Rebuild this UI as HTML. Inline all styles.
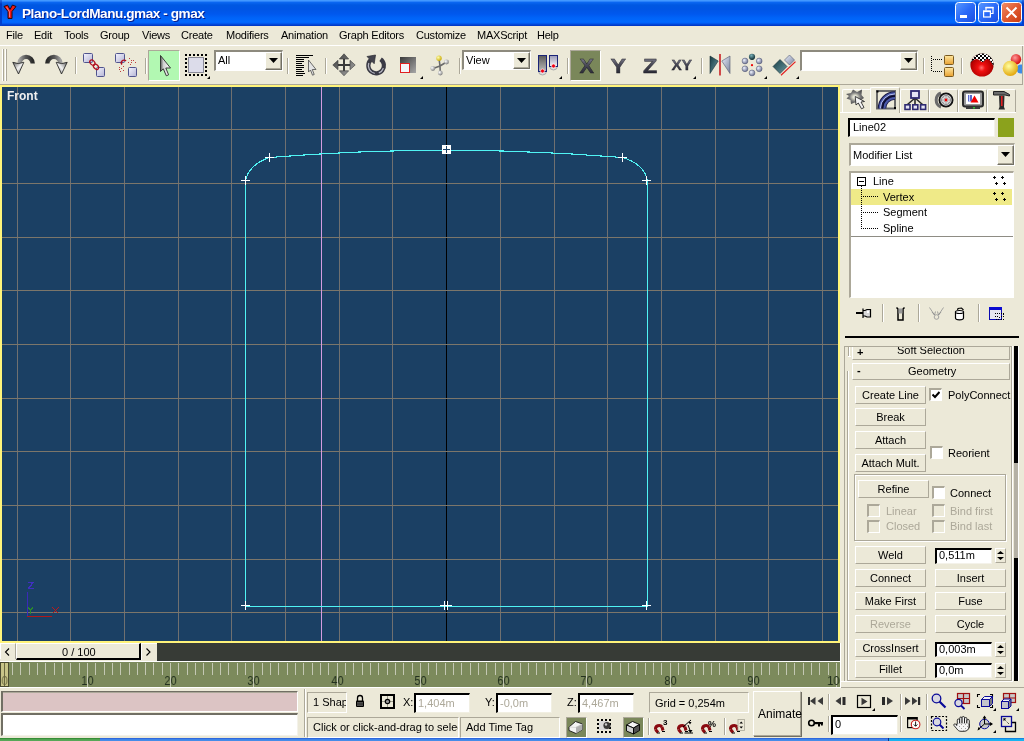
<!DOCTYPE html><html><head><meta charset="utf-8"><style>
*{margin:0;padding:0;box-sizing:border-box}
html,body{width:1024px;height:741px;overflow:hidden;background:#ECE9D8;font-family:"Liberation Sans",sans-serif;font-size:11px;color:#000}
.a{position:absolute}
.t{position:absolute;white-space:nowrap;line-height:13px}
.btn{position:absolute;background:#ECE9D8;border-top:1px solid #fff;border-left:1px solid #fff;border-right:1px solid #ACA899;border-bottom:1px solid #ACA899;text-align:center;line-height:16px;white-space:nowrap}
.sunk{position:absolute;background:#fff;border-top:2px solid #000;border-left:2px solid #000;border-right:1px solid #F4F2EA;border-bottom:1px solid #F4F2EA}
.sunk1{position:absolute;border-top:1px solid #ACA899;border-left:1px solid #ACA899;border-right:1px solid #fff;border-bottom:1px solid #fff}
.rais{position:absolute;border-top:1px solid #fff;border-left:1px solid #fff;border-right:1px solid #ACA899;border-bottom:1px solid #ACA899}
.vsep{position:absolute;width:2px;border-left:1px solid #ACA899;border-right:1px solid #fff}
.cb{position:absolute;width:13px;height:13px;background:#fff;border-top:2px solid #ACA899;border-left:2px solid #ACA899;border-right:1px solid #fff;border-bottom:1px solid #fff}
.dis{color:#ACA899}
.t,.btn{will-change:transform}</style></head><body>
<div class="a" style="left:0px;top:0px;width:1024px;height:26px;background:linear-gradient(#4AA0FF 0,#3A90FF 1px,#0A66F0 2.5px,#0058E2 5px,#0055E4 9px,#0058EE 14px,#0064F8 18px,#0068FF 22px,#0060F8 23px,#0046D8 24.5px,#0032C0 26px);"></div>
<div class="a" style="left:0px;top:0px;width:2px;height:26px;background:linear-gradient(#2A70E8,#0038C0 4px,#0040D0);"></div>
<div class="a" style="left:1022px;top:0px;width:2px;height:26px;background:linear-gradient(#2A70E8,#0038C0 4px,#0040D0);"></div>
<div class="t" style="left:22px;top:5px;font-size:13.6px;font-weight:bold;color:#fff;line-height:17px;letter-spacing:-0.45px;text-shadow:1px 1px 0 #0A1E8C">Plano-LordManu.gmax - gmax</div>
<div class="a" style="left:0px;top:45px;width:1024px;height:1px;background:#fff;"></div>
<div class="t" style="left:6px;top:29px;letter-spacing:-0.22px">File</div>
<div class="t" style="left:34px;top:29px;letter-spacing:-0.22px">Edit</div>
<div class="t" style="left:64px;top:29px;letter-spacing:-0.22px">Tools</div>
<div class="t" style="left:100px;top:29px;letter-spacing:-0.22px">Group</div>
<div class="t" style="left:142px;top:29px;letter-spacing:-0.22px">Views</div>
<div class="t" style="left:181px;top:29px;letter-spacing:-0.22px">Create</div>
<div class="t" style="left:226px;top:29px;letter-spacing:-0.22px">Modifiers</div>
<div class="t" style="left:281px;top:29px;letter-spacing:-0.22px">Animation</div>
<div class="t" style="left:339px;top:29px;letter-spacing:-0.22px">Graph Editors</div>
<div class="t" style="left:416px;top:29px;letter-spacing:-0.22px">Customize</div>
<div class="t" style="left:477px;top:29px;letter-spacing:-0.22px">MAXScript</div>
<div class="t" style="left:537px;top:29px;letter-spacing:-0.22px">Help</div>
<div class="a" style="left:0px;top:84px;width:1024px;height:1px;background:#ACA899;"></div>
<div class="a" style="left:2px;top:49px;width:1px;height:32px;background:#fff;"></div>
<div class="a" style="left:3px;top:49px;width:1px;height:32px;background:#ACA899;"></div>
<div class="a" style="left:5px;top:49px;width:1px;height:32px;background:#fff;"></div>
<div class="a" style="left:6px;top:49px;width:1px;height:32px;background:#ACA899;"></div>
<div class="vsep" style="left:75px;top:57px;height:17px"></div>
<div class="vsep" style="left:145px;top:58px;height:16px"></div>
<div class="vsep" style="left:287px;top:58px;height:16px"></div>
<div class="vsep" style="left:325px;top:58px;height:16px"></div>
<div class="vsep" style="left:459px;top:58px;height:16px"></div>
<div class="vsep" style="left:567px;top:58px;height:16px"></div>
<div class="vsep" style="left:701px;top:58px;height:16px"></div>
<div class="vsep" style="left:923px;top:58px;height:16px"></div>
<div class="vsep" style="left:961px;top:58px;height:16px"></div>
<div class="a" style="left:1022px;top:46px;width:1px;height:38px;background:#ACA899;"></div>
<div class="a" style="left:1023px;top:46px;width:1px;height:39px;background:#ECE9D8;"></div>
<div class="a" style="left:148px;top:50px;width:32px;height:31px;background:#B2F8B2;border-top:1px solid #ACA899;border-left:1px solid #ACA899;border-right:1px solid #fff;border-bottom:1px solid #fff"></div>
<div class="a" style="left:570px;top:50px;width:31px;height:31px;background:#7A875A;border-top:1px solid #ACA899;border-left:1px solid #ACA899;border-right:1px solid #fff;border-bottom:1px solid #fff"></div>
<div class="a" style="left:214px;top:50px;width:69px;height:21px;background:#fff;border-top:2px solid #8D8A7E;border-left:2px solid #8D8A7E;border-right:1px solid #fff;border-bottom:1px solid #fff"></div>
<div class="t" style="left:218px;top:54px;">All</div>
<div class="btn" style="left:265px;top:52px;width:17px;height:18px;box-shadow:inset -1px -1px 0 #ACA899;border-right-color:#716F64;border-bottom-color:#716F64"></div>
<svg class="a" style="left:269px;top:58px" width="9" height="5"><path d="M0 0H9L4.5 5Z" fill="#000"/></svg>
<div class="a" style="left:462px;top:50px;width:69px;height:20px;background:#fff;border-top:2px solid #8D8A7E;border-left:2px solid #8D8A7E;border-right:1px solid #fff;border-bottom:1px solid #fff"></div>
<div class="t" style="left:466px;top:54px;">View</div>
<div class="btn" style="left:513px;top:52px;width:17px;height:17px;box-shadow:inset -1px -1px 0 #ACA899;border-right-color:#716F64;border-bottom-color:#716F64"></div>
<svg class="a" style="left:517px;top:58px" width="9" height="5"><path d="M0 0H9L4.5 5Z" fill="#000"/></svg>
<div class="a" style="left:800px;top:50px;width:118px;height:21px;background:#fff;border-top:2px solid #8D8A7E;border-left:2px solid #8D8A7E;border-right:1px solid #fff;border-bottom:1px solid #fff"></div>
<div class="btn" style="left:900px;top:52px;width:17px;height:18px;box-shadow:inset -1px -1px 0 #ACA899;border-right-color:#716F64;border-bottom-color:#716F64"></div>
<svg class="a" style="left:904px;top:58px" width="9" height="5"><path d="M0 0H9L4.5 5Z" fill="#000"/></svg>
<div class="a" style="left:0px;top:85px;width:840px;height:558px;background:#FFF47A;"></div>
<svg class="a" style="left:2px;top:87px" width="836" height="554" shape-rendering="crispEdges"><g transform="translate(-2,-87)"><rect x="2" y="87" width="836" height="554" fill="#1B4064"/><rect x="17" y="87" width="1" height="554" fill="#707070"/><rect x="70" y="87" width="1" height="554" fill="#707070"/><rect x="124" y="87" width="1" height="554" fill="#707070"/><rect x="178" y="87" width="1" height="554" fill="#707070"/><rect x="231" y="87" width="1" height="554" fill="#707070"/><rect x="285" y="87" width="1" height="554" fill="#707070"/><rect x="339" y="87" width="1" height="554" fill="#707070"/><rect x="392" y="87" width="1" height="554" fill="#707070"/><rect x="446" y="87" width="1" height="554" fill="#000"/><rect x="500" y="87" width="1" height="554" fill="#707070"/><rect x="554" y="87" width="1" height="554" fill="#707070"/><rect x="607" y="87" width="1" height="554" fill="#707070"/><rect x="661" y="87" width="1" height="554" fill="#707070"/><rect x="715" y="87" width="1" height="554" fill="#707070"/><rect x="768" y="87" width="1" height="554" fill="#707070"/><rect x="822" y="87" width="1" height="554" fill="#707070"/><rect x="2" y="129" width="836" height="1" fill="#7C766A"/><rect x="2" y="183" width="836" height="1" fill="#7C766A"/><rect x="2" y="237" width="836" height="1" fill="#7C766A"/><rect x="2" y="290" width="836" height="1" fill="#7C766A"/><rect x="2" y="344" width="836" height="1" fill="#7C766A"/><rect x="2" y="398" width="836" height="1" fill="#7C766A"/><rect x="2" y="451" width="836" height="1" fill="#7C766A"/><rect x="2" y="505" width="836" height="1" fill="#7C766A"/><rect x="2" y="559" width="836" height="1" fill="#7C766A"/><rect x="2" y="612" width="836" height="1" fill="#7C766A"/><rect x="321" y="87" width="1" height="554" fill="#D49CE0"/></g></svg>
<svg class="a" style="left:2px;top:87px" width="836" height="554" shape-rendering="crispEdges"><g transform="translate(-2,-87)"><path d="M245.5 606.5V180.5C247.5 171 255.5 162 269.5 157.5Q446 143 622.5 157.5C637.5 162 645.5 171 647.5 180.5V606.5H245.5Z" fill="none" stroke="#50F4F4" stroke-width="1.1"/><g fill="#FFFFFF" shape-rendering="crispEdges"><rect x="241" y="180" width="9" height="1"/><rect x="245" y="176" width="1" height="9"/><rect x="265" y="157" width="9" height="1"/><rect x="269" y="153" width="1" height="9"/><rect x="618" y="157" width="9" height="1"/><rect x="622" y="153" width="1" height="9"/><rect x="642" y="180" width="9" height="1"/><rect x="646" y="176" width="1" height="9"/><rect x="241" y="605" width="9" height="1"/><rect x="245" y="601" width="1" height="9"/><rect x="642" y="605" width="9" height="1"/><rect x="646" y="601" width="1" height="9"/><rect x="440" y="605" width="12" height="1"/><rect x="444" y="601" width="1" height="9"/><rect x="447" y="601" width="1" height="9"/><rect x="442" y="145" width="9" height="9"/></g><g shape-rendering="crispEdges"><rect x="446" y="146" width="1" height="7" fill="#1B4064"/><rect x="443" y="149" width="7" height="1" fill="#1B4064"/></g><g shape-rendering="crispEdges"><rect x="27" y="592" width="1" height="25" fill="#3A2AB8"/><rect x="27" y="616" width="25" height="1" fill="#B01818"/></g><path d="M28 582.5H33L28.5 588.5H33.5" stroke="#4030C0" stroke-width="1.3" fill="none"/><path d="M52.5 607.5L58.5 613.5M58.5 607.5L52.5 613.5" stroke="#C01818" stroke-width="1.3"/><path d="M28.5 607.5L30.5 610.5L32.5 607.5M30.5 610.5V614" stroke="#2A8A2A" stroke-width="1.2" fill="none"/></g></svg>
<div class="t" style="left:7px;top:90px;color:#F0F0F0;font-weight:bold;font-size:12px">Front</div>
<div class="a" style="left:840px;top:112px;width:176px;height:1px;background:#fff;"></div>
<div class="a" style="left:842px;top:89px;width:29px;height:23px;border-left:1px solid #fff;border-top:1px solid #fff;border-right:1px solid #ACA899;border-radius:2px 2px 0 0"></div>
<div class="a" style="left:870px;top:87px;width:30px;height:26px;background:#ECE9D8;border-left:1px solid #fff;border-top:1px solid #fff;border-right:1px solid #ACA899;border-radius:2px 2px 0 0"></div>
<div class="a" style="left:900px;top:89px;width:29px;height:23px;border-left:1px solid #fff;border-top:1px solid #fff;border-right:1px solid #ACA899;border-radius:2px 2px 0 0"></div>
<div class="a" style="left:929px;top:89px;width:29px;height:23px;border-left:1px solid #fff;border-top:1px solid #fff;border-right:1px solid #ACA899;border-radius:2px 2px 0 0"></div>
<div class="a" style="left:958px;top:89px;width:29px;height:23px;border-left:1px solid #fff;border-top:1px solid #fff;border-right:1px solid #ACA899;border-radius:2px 2px 0 0"></div>
<div class="a" style="left:987px;top:89px;width:29px;height:23px;border-left:1px solid #fff;border-top:1px solid #fff;border-right:1px solid #ACA899;border-radius:2px 2px 0 0"></div>
<div class="sunk" style="left:848px;top:118px;width:147px;height:19px"></div>
<div class="t" style="left:853px;top:121px;">Line02</div>
<div class="a" style="left:998px;top:118px;width:16px;height:19px;background:#8BA21C;"></div>
<div class="a" style="left:849px;top:143px;width:166px;height:23px;background:#fff;border-top:2px solid #ACA899;border-left:2px solid #ACA899;border-right:1px solid #fff;border-bottom:1px solid #fff"></div>
<div class="t" style="left:853px;top:149px;">Modifier List</div>
<div class="btn" style="left:997px;top:145px;width:17px;height:20px;box-shadow:inset -1px -1px 0 #ACA899;border-right-color:#716F64;border-bottom-color:#716F64"></div>
<svg class="a" style="left:1001px;top:152px" width="9" height="5"><path d="M0 0H9L4.5 5Z" fill="#000"/></svg>
<div class="a" style="left:849px;top:171px;width:165px;height:127px;background:#fff;border-top:2px solid #ACA899;border-left:2px solid #ACA899;border-right:1px solid #fff;border-bottom:1px solid #fff"></div>
<div class="a" style="left:851px;top:189px;width:161px;height:16px;background:#EFEA88;"></div>
<div class="a" style="left:851px;top:236px;width:162px;height:1px;background:#8E8C84;"></div>
<div class="a" style="left:857px;top:177px;width:9px;height:9px;border:1px solid #000;background:#fff"></div>
<div class="a" style="left:859px;top:181px;width:5px;height:1px;background:#000;"></div>
<div class="t" style="left:873px;top:175px;">Line</div>
<div class="t" style="left:883px;top:191px;">Vertex</div>
<div class="t" style="left:883px;top:206px;">Segment</div>
<div class="t" style="left:883px;top:222px;">Spline</div>
<svg class="a" style="left:855px;top:185px" width="30" height="46" shape-rendering="crispEdges"><rect x="6" y="1" width="1" height="1" fill="#000"/><rect x="6" y="3" width="1" height="1" fill="#000"/><rect x="6" y="5" width="1" height="1" fill="#000"/><rect x="6" y="7" width="1" height="1" fill="#000"/><rect x="6" y="9" width="1" height="1" fill="#000"/><rect x="6" y="11" width="1" height="1" fill="#000"/><rect x="6" y="13" width="1" height="1" fill="#000"/><rect x="6" y="15" width="1" height="1" fill="#000"/><rect x="6" y="17" width="1" height="1" fill="#000"/><rect x="6" y="19" width="1" height="1" fill="#000"/><rect x="6" y="21" width="1" height="1" fill="#000"/><rect x="6" y="23" width="1" height="1" fill="#000"/><rect x="6" y="25" width="1" height="1" fill="#000"/><rect x="6" y="27" width="1" height="1" fill="#000"/><rect x="6" y="29" width="1" height="1" fill="#000"/><rect x="6" y="31" width="1" height="1" fill="#000"/><rect x="6" y="33" width="1" height="1" fill="#000"/><rect x="6" y="35" width="1" height="1" fill="#000"/><rect x="6" y="37" width="1" height="1" fill="#000"/><rect x="6" y="39" width="1" height="1" fill="#000"/><rect x="6" y="41" width="1" height="1" fill="#000"/><rect x="6" y="43" width="1" height="1" fill="#000"/><rect x="8" y="11" width="1" height="1" fill="#000"/><rect x="10" y="11" width="1" height="1" fill="#000"/><rect x="12" y="11" width="1" height="1" fill="#000"/><rect x="14" y="11" width="1" height="1" fill="#000"/><rect x="16" y="11" width="1" height="1" fill="#000"/><rect x="18" y="11" width="1" height="1" fill="#000"/><rect x="20" y="11" width="1" height="1" fill="#000"/><rect x="22" y="11" width="1" height="1" fill="#000"/><rect x="8" y="27" width="1" height="1" fill="#000"/><rect x="10" y="27" width="1" height="1" fill="#000"/><rect x="12" y="27" width="1" height="1" fill="#000"/><rect x="14" y="27" width="1" height="1" fill="#000"/><rect x="16" y="27" width="1" height="1" fill="#000"/><rect x="18" y="27" width="1" height="1" fill="#000"/><rect x="20" y="27" width="1" height="1" fill="#000"/><rect x="22" y="27" width="1" height="1" fill="#000"/><rect x="8" y="43" width="1" height="1" fill="#000"/><rect x="10" y="43" width="1" height="1" fill="#000"/><rect x="12" y="43" width="1" height="1" fill="#000"/><rect x="14" y="43" width="1" height="1" fill="#000"/><rect x="16" y="43" width="1" height="1" fill="#000"/><rect x="18" y="43" width="1" height="1" fill="#000"/><rect x="20" y="43" width="1" height="1" fill="#000"/><rect x="22" y="43" width="1" height="1" fill="#000"/></svg>
<svg class="a" style="left:993px;top:176px" width="14" height="10" shape-rendering="crispEdges"><rect x="1" y="0" width="1" height="3" fill="#000"/><rect x="0" y="1" width="3" height="1" fill="#000"/><rect x="9" y="0" width="1" height="3" fill="#000"/><rect x="8" y="1" width="3" height="1" fill="#000"/><rect x="3" y="6" width="1" height="3" fill="#000"/><rect x="2" y="7" width="3" height="1" fill="#000"/><rect x="11" y="6" width="1" height="3" fill="#000"/><rect x="10" y="7" width="3" height="1" fill="#000"/></svg>
<svg class="a" style="left:993px;top:192px" width="14" height="10" shape-rendering="crispEdges"><rect x="1" y="0" width="1" height="3" fill="#000"/><rect x="0" y="1" width="3" height="1" fill="#000"/><rect x="9" y="0" width="1" height="3" fill="#000"/><rect x="8" y="1" width="3" height="1" fill="#000"/><rect x="3" y="6" width="1" height="3" fill="#000"/><rect x="2" y="7" width="3" height="1" fill="#000"/><rect x="11" y="6" width="1" height="3" fill="#000"/><rect x="10" y="7" width="3" height="1" fill="#000"/></svg>
<div class="vsep" style="left:882px;top:304px;height:18px"></div>
<div class="vsep" style="left:918px;top:304px;height:18px"></div>
<div class="vsep" style="left:978px;top:304px;height:18px"></div>
<div class="a" style="left:845px;top:336px;width:174px;height:2px;background:#000;"></div>
<div class="a" style="left:844px;top:346px;width:1px;height:335px;background:#ACA899;"></div>
<div class="a" style="left:847px;top:371px;width:1px;height:309px;background:#ACA899;"></div>
<div class="a" style="left:848px;top:371px;width:1px;height:309px;background:#fff;"></div>
<div class="a" style="left:1011px;top:346px;width:1px;height:335px;background:#ACA899;"></div>
<div class="a" style="left:1012px;top:346px;width:1px;height:336px;background:#fff;"></div>
<div class="a" style="left:847px;top:680px;width:165px;height:1px;background:#ACA899;"></div>
<div class="a" style="left:841px;top:681px;width:172px;height:1px;background:#fff;"></div>
<div class="a" style="left:840px;top:643px;width:1px;height:45px;background:#fff;"></div>
<div class="a" style="left:841px;top:687px;width:183px;height:1px;background:#ACA899;"></div>
<div class="a" style="left:1014px;top:346px;width:4px;height:117px;background:#000;"></div>
<div class="a" style="left:1014px;top:463px;width:4px;height:95px;background:#B5B1A5;"></div>
<div class="a" style="left:1014px;top:558px;width:4px;height:123px;background:#000;"></div>
<div class="a" style="left:1018px;top:346px;width:1px;height:335px;background:#fff;"></div>
<div class="a" style="left:844px;top:346px;width:168px;height:14px;overflow:hidden"><div class="a" style="left:8px;top:-4px;width:158px;height:18px;border-left:1px solid #fff;border-top:1px solid #fff;border-right:1px solid #ACA899;border-bottom:1px solid #ACA899"></div><div class="t" style="left:13px;top:0px;font-weight:bold">+</div><div class="t" style="left:53px;top:-2px">Soft Selection</div><div class="a" style="left:4px;top:0;width:1px;height:10px;background:#ACA899"></div><div class="a" style="left:5px;top:0;width:1px;height:10px;background:#fff"></div><div class="a" style="left:4px;top:10px;width:3px;height:1px;background:#fff"></div></div>
<div class="a" style="left:844px;top:346px;width:168px;height:1px;background:#ACA899;"></div>
<div class="rais" style="left:852px;top:363px;width:158px;height:17px"></div>
<div class="t" style="left:857px;top:364px;font-weight:bold">-</div>
<div class="t" style="left:908px;top:365px;">Geometry</div>
<div class="btn" style="left:855px;top:386px;width:71px;height:18px;">Create Line</div>
<div class="a" style="left:929px;top:388px;width:13px;height:13px;background:#fff;border-top:2px solid #ACA899;border-left:2px solid #ACA899;border-right:1px solid #fff;border-bottom:1px solid #fff"></div>
<svg class="a" style="left:932px;top:391px" width="8" height="8"><path d="M0.5 3.5L3 6L7.5 1" stroke="#000" stroke-width="2" fill="none"/></svg>
<div class="t" style="left:948px;top:389px;">PolyConnect</div>
<div class="btn" style="left:855px;top:408px;width:71px;height:18px;">Break</div>
<div class="btn" style="left:855px;top:431px;width:71px;height:18px;">Attach</div>
<div class="btn" style="left:855px;top:454px;width:71px;height:18px;">Attach Mult.</div>
<div class="a" style="left:930px;top:446px;width:13px;height:13px;background:#fff;border-top:2px solid #ACA899;border-left:2px solid #ACA899;border-right:1px solid #fff;border-bottom:1px solid #fff"></div>
<div class="t" style="left:948px;top:447px;">Reorient</div>
<div class="a" style="left:854px;top:474px;width:152px;height:67px;border:1px solid #ACA899;box-shadow:1px 1px 0 #fff, inset 1px 1px 0 #fff"></div>
<div class="btn" style="left:858px;top:480px;width:71px;height:18px;">Refine</div>
<div class="a" style="left:932px;top:486px;width:13px;height:13px;background:#fff;border-top:2px solid #ACA899;border-left:2px solid #ACA899;border-right:1px solid #fff;border-bottom:1px solid #fff"></div>
<div class="t" style="left:950px;top:487px;">Connect</div>
<div class="a" style="left:867px;top:504px;width:13px;height:13px;background:#ECE9D8;border-top:2px solid #ACA899;border-left:2px solid #ACA899;border-right:1px solid #fff;border-bottom:1px solid #fff"></div>
<div class="t" style="left:886px;top:505px;color:#ACA899">Linear</div>
<div class="a" style="left:867px;top:520px;width:13px;height:13px;background:#ECE9D8;border-top:2px solid #ACA899;border-left:2px solid #ACA899;border-right:1px solid #fff;border-bottom:1px solid #fff"></div>
<div class="t" style="left:886px;top:520px;color:#ACA899">Closed</div>
<div class="a" style="left:932px;top:504px;width:13px;height:13px;background:#ECE9D8;border-top:2px solid #ACA899;border-left:2px solid #ACA899;border-right:1px solid #fff;border-bottom:1px solid #fff"></div>
<div class="t" style="left:950px;top:505px;color:#ACA899">Bind first</div>
<div class="a" style="left:932px;top:520px;width:13px;height:13px;background:#ECE9D8;border-top:2px solid #ACA899;border-left:2px solid #ACA899;border-right:1px solid #fff;border-bottom:1px solid #fff"></div>
<div class="t" style="left:950px;top:520px;color:#ACA899">Bind last</div>
<div class="btn" style="left:855px;top:546px;width:71px;height:18px;">Weld</div>
<div class="a" style="left:935px;top:548px;width:57px;height:16px;background:#fff;border-top:2px solid #000;border-left:2px solid #000;border-right:1px solid #F4F2EA;border-bottom:1px solid #F4F2EA"></div>
<div class="t" style="left:939px;top:549px;">0,511m</div>
<div class="btn" style="left:995px;top:548px;width:11px;height:15px"></div>
<svg class="a" style="left:997px;top:551px" width="7" height="10"><path d="M3.5 0L7 3H0Z M0 6H7L3.5 9Z" fill="#000"/></svg>
<div class="btn" style="left:855px;top:569px;width:71px;height:18px;">Connect</div>
<div class="btn" style="left:935px;top:569px;width:71px;height:18px;">Insert</div>
<div class="btn" style="left:855px;top:592px;width:71px;height:18px;">Make First</div>
<div class="btn" style="left:935px;top:592px;width:71px;height:18px;">Fuse</div>
<div class="btn" style="left:855px;top:615px;width:71px;height:18px;color:#ACA899">Reverse</div>
<div class="btn" style="left:935px;top:615px;width:71px;height:18px;">Cycle</div>
<div class="btn" style="left:855px;top:639px;width:71px;height:18px;">CrossInsert</div>
<div class="a" style="left:935px;top:642px;width:57px;height:15px;background:#fff;border-top:2px solid #000;border-left:2px solid #000;border-right:1px solid #F4F2EA;border-bottom:1px solid #F4F2EA"></div>
<div class="t" style="left:939px;top:643px;">0,003m</div>
<div class="btn" style="left:995px;top:642px;width:11px;height:15px"></div>
<svg class="a" style="left:997px;top:645px" width="7" height="10"><path d="M3.5 0L7 3H0Z M0 6H7L3.5 9Z" fill="#000"/></svg>
<div class="btn" style="left:855px;top:660px;width:71px;height:18px;">Fillet</div>
<div class="a" style="left:935px;top:663px;width:57px;height:15px;background:#fff;border-top:2px solid #000;border-left:2px solid #000;border-right:1px solid #F4F2EA;border-bottom:1px solid #F4F2EA"></div>
<div class="t" style="left:939px;top:664px;">0,0m</div>
<div class="btn" style="left:995px;top:663px;width:11px;height:15px"></div>
<svg class="a" style="left:997px;top:666px" width="7" height="10"><path d="M3.5 0L7 3H0Z M0 6H7L3.5 9Z" fill="#000"/></svg>
<div class="a" style="left:157px;top:643px;width:683px;height:18px;background:#373B36;"></div>
<div class="a" style="left:0;top:643px;width:16px;height:16px;background:#ECE9D8;border-top:1px solid #fff;border-left:1px solid #fff;border-right:1px solid #ACA899"></div>
<div class="a" style="left:16px;top:643px;width:125px;height:17px;background:#ECE9D8;border-top:1px solid #fff;border-left:1px solid #fff;border-right:2px solid #000;border-bottom:2px solid #000"></div>
<div class="a" style="left:141px;top:643px;width:16px;height:17px;background:#ECE9D8;border-top:1px solid #fff;border-left:1px solid #fff"></div>
<div class="t" style="left:62px;top:646px;">0 / 100</div>
<div class="a" style="left:0px;top:661px;width:840px;height:1px;background:#fff;"></div>
<div class="a" style="left:0px;top:662px;width:840px;height:25px;background:#7C8A5C;"></div>
<svg class="a" style="left:0;top:662px" width="840" height="25" shape-rendering="crispEdges"><rect x="12" y="1" width="1" height="12" fill="#C4C8B4"/><rect x="20" y="1" width="1" height="12" fill="#C4C8B4"/><rect x="29" y="1" width="1" height="12" fill="#C4C8B4"/><rect x="37" y="1" width="1" height="12" fill="#C4C8B4"/><rect x="45" y="1" width="1" height="12" fill="#C4C8B4"/><rect x="54" y="1" width="1" height="12" fill="#C4C8B4"/><rect x="62" y="1" width="1" height="12" fill="#C4C8B4"/><rect x="70" y="1" width="1" height="12" fill="#C4C8B4"/><rect x="79" y="1" width="1" height="12" fill="#C4C8B4"/><rect x="87" y="1" width="1" height="24" fill="#C4C8B4"/><rect x="95" y="1" width="1" height="12" fill="#C4C8B4"/><rect x="104" y="1" width="1" height="12" fill="#C4C8B4"/><rect x="112" y="1" width="1" height="12" fill="#C4C8B4"/><rect x="120" y="1" width="1" height="12" fill="#C4C8B4"/><rect x="129" y="1" width="1" height="12" fill="#C4C8B4"/><rect x="137" y="1" width="1" height="12" fill="#C4C8B4"/><rect x="145" y="1" width="1" height="12" fill="#C4C8B4"/><rect x="153" y="1" width="1" height="12" fill="#C4C8B4"/><rect x="162" y="1" width="1" height="12" fill="#C4C8B4"/><rect x="170" y="1" width="1" height="24" fill="#C4C8B4"/><rect x="178" y="1" width="1" height="12" fill="#C4C8B4"/><rect x="187" y="1" width="1" height="12" fill="#C4C8B4"/><rect x="195" y="1" width="1" height="12" fill="#C4C8B4"/><rect x="203" y="1" width="1" height="12" fill="#C4C8B4"/><rect x="212" y="1" width="1" height="12" fill="#C4C8B4"/><rect x="220" y="1" width="1" height="12" fill="#C4C8B4"/><rect x="228" y="1" width="1" height="12" fill="#C4C8B4"/><rect x="237" y="1" width="1" height="12" fill="#C4C8B4"/><rect x="245" y="1" width="1" height="12" fill="#C4C8B4"/><rect x="253" y="1" width="1" height="24" fill="#C4C8B4"/><rect x="262" y="1" width="1" height="12" fill="#C4C8B4"/><rect x="270" y="1" width="1" height="12" fill="#C4C8B4"/><rect x="278" y="1" width="1" height="12" fill="#C4C8B4"/><rect x="287" y="1" width="1" height="12" fill="#C4C8B4"/><rect x="295" y="1" width="1" height="12" fill="#C4C8B4"/><rect x="303" y="1" width="1" height="12" fill="#C4C8B4"/><rect x="312" y="1" width="1" height="12" fill="#C4C8B4"/><rect x="320" y="1" width="1" height="12" fill="#C4C8B4"/><rect x="328" y="1" width="1" height="12" fill="#C4C8B4"/><rect x="337" y="1" width="1" height="24" fill="#C4C8B4"/><rect x="345" y="1" width="1" height="12" fill="#C4C8B4"/><rect x="353" y="1" width="1" height="12" fill="#C4C8B4"/><rect x="362" y="1" width="1" height="12" fill="#C4C8B4"/><rect x="370" y="1" width="1" height="12" fill="#C4C8B4"/><rect x="378" y="1" width="1" height="12" fill="#C4C8B4"/><rect x="387" y="1" width="1" height="12" fill="#C4C8B4"/><rect x="395" y="1" width="1" height="12" fill="#C4C8B4"/><rect x="403" y="1" width="1" height="12" fill="#C4C8B4"/><rect x="412" y="1" width="1" height="12" fill="#C4C8B4"/><rect x="420" y="1" width="1" height="24" fill="#C4C8B4"/><rect x="428" y="1" width="1" height="12" fill="#C4C8B4"/><rect x="436" y="1" width="1" height="12" fill="#C4C8B4"/><rect x="445" y="1" width="1" height="12" fill="#C4C8B4"/><rect x="453" y="1" width="1" height="12" fill="#C4C8B4"/><rect x="461" y="1" width="1" height="12" fill="#C4C8B4"/><rect x="470" y="1" width="1" height="12" fill="#C4C8B4"/><rect x="478" y="1" width="1" height="12" fill="#C4C8B4"/><rect x="486" y="1" width="1" height="12" fill="#C4C8B4"/><rect x="495" y="1" width="1" height="12" fill="#C4C8B4"/><rect x="503" y="1" width="1" height="24" fill="#C4C8B4"/><rect x="511" y="1" width="1" height="12" fill="#C4C8B4"/><rect x="520" y="1" width="1" height="12" fill="#C4C8B4"/><rect x="528" y="1" width="1" height="12" fill="#C4C8B4"/><rect x="536" y="1" width="1" height="12" fill="#C4C8B4"/><rect x="545" y="1" width="1" height="12" fill="#C4C8B4"/><rect x="553" y="1" width="1" height="12" fill="#C4C8B4"/><rect x="561" y="1" width="1" height="12" fill="#C4C8B4"/><rect x="570" y="1" width="1" height="12" fill="#C4C8B4"/><rect x="578" y="1" width="1" height="12" fill="#C4C8B4"/><rect x="586" y="1" width="1" height="24" fill="#C4C8B4"/><rect x="595" y="1" width="1" height="12" fill="#C4C8B4"/><rect x="603" y="1" width="1" height="12" fill="#C4C8B4"/><rect x="611" y="1" width="1" height="12" fill="#C4C8B4"/><rect x="620" y="1" width="1" height="12" fill="#C4C8B4"/><rect x="628" y="1" width="1" height="12" fill="#C4C8B4"/><rect x="636" y="1" width="1" height="12" fill="#C4C8B4"/><rect x="645" y="1" width="1" height="12" fill="#C4C8B4"/><rect x="653" y="1" width="1" height="12" fill="#C4C8B4"/><rect x="661" y="1" width="1" height="12" fill="#C4C8B4"/><rect x="670" y="1" width="1" height="24" fill="#C4C8B4"/><rect x="678" y="1" width="1" height="12" fill="#C4C8B4"/><rect x="686" y="1" width="1" height="12" fill="#C4C8B4"/><rect x="694" y="1" width="1" height="12" fill="#C4C8B4"/><rect x="703" y="1" width="1" height="12" fill="#C4C8B4"/><rect x="711" y="1" width="1" height="12" fill="#C4C8B4"/><rect x="719" y="1" width="1" height="12" fill="#C4C8B4"/><rect x="728" y="1" width="1" height="12" fill="#C4C8B4"/><rect x="736" y="1" width="1" height="12" fill="#C4C8B4"/><rect x="744" y="1" width="1" height="12" fill="#C4C8B4"/><rect x="753" y="1" width="1" height="24" fill="#C4C8B4"/><rect x="761" y="1" width="1" height="12" fill="#C4C8B4"/><rect x="769" y="1" width="1" height="12" fill="#C4C8B4"/><rect x="778" y="1" width="1" height="12" fill="#C4C8B4"/><rect x="786" y="1" width="1" height="12" fill="#C4C8B4"/><rect x="794" y="1" width="1" height="12" fill="#C4C8B4"/><rect x="803" y="1" width="1" height="12" fill="#C4C8B4"/><rect x="811" y="1" width="1" height="12" fill="#C4C8B4"/><rect x="819" y="1" width="1" height="12" fill="#C4C8B4"/><rect x="828" y="1" width="1" height="12" fill="#C4C8B4"/><rect x="836" y="1" width="1" height="24" fill="#C4C8B4"/><rect x="0" y="0" width="9" height="25" fill="#4A4A30"/><rect x="1" y="1" width="7" height="23" fill="#C8C488"/><rect x="4" y="1" width="1" height="23" fill="#6A6840"/></svg>
<div class="a" style="left:0;top:0;width:840px;height:741px;overflow:hidden">
<div class="t" style="left:72px;top:674px;width:31px;text-align:center;color:#22301E;font-size:13px;line-height:13px;transform:scaleX(0.86)">10</div>
<div class="t" style="left:155px;top:674px;width:31px;text-align:center;color:#22301E;font-size:13px;line-height:13px;transform:scaleX(0.86)">20</div>
<div class="t" style="left:238px;top:674px;width:31px;text-align:center;color:#22301E;font-size:13px;line-height:13px;transform:scaleX(0.86)">30</div>
<div class="t" style="left:322px;top:674px;width:31px;text-align:center;color:#22301E;font-size:13px;line-height:13px;transform:scaleX(0.86)">40</div>
<div class="t" style="left:405px;top:674px;width:31px;text-align:center;color:#22301E;font-size:13px;line-height:13px;transform:scaleX(0.86)">50</div>
<div class="t" style="left:488px;top:674px;width:31px;text-align:center;color:#22301E;font-size:13px;line-height:13px;transform:scaleX(0.86)">60</div>
<div class="t" style="left:571px;top:674px;width:31px;text-align:center;color:#22301E;font-size:13px;line-height:13px;transform:scaleX(0.86)">70</div>
<div class="t" style="left:655px;top:674px;width:31px;text-align:center;color:#22301E;font-size:13px;line-height:13px;transform:scaleX(0.86)">80</div>
<div class="t" style="left:738px;top:674px;width:31px;text-align:center;color:#22301E;font-size:13px;line-height:13px;transform:scaleX(0.86)">90</div>
<div class="t" style="left:821px;top:674px;width:31px;text-align:center;color:#22301E;font-size:13px;line-height:13px;transform:scaleX(0.86)">100</div>
<div class="t" style="left:1px;top:674px;color:#6A6840;font-size:13px;line-height:13px;transform:scaleX(0.86)">0</div>
</div>
<div class="a" style="left:0px;top:687px;width:840px;height:1px;background:#fff;"></div>
<div class="a" style="left:1px;top:691px;width:297px;height:21px;background:#DCC4C4;border-top:1px solid #716F64;border-left:2px solid #716F64;border-right:1px solid #fff;border-bottom:1px solid #fff;box-shadow:inset 0 1px 0 #ACA899"></div>
<div class="a" style="left:1px;top:713px;width:297px;height:23px;background:#fff;border-top:2px solid #716F64;border-left:2px solid #716F64;border-right:1px solid #F4F2EA;border-bottom:1px solid #F4F2EA"></div>
<div class="vsep" style="left:304px;top:689px;height:48px"></div>
<div class="sunk1" style="left:307px;top:692px;width:40px;height:21px;overflow:hidden"><div class="t" style="left:5px;top:3px;">1 Shape Selected</div></div>
<div class="t" style="left:403px;top:696px;">X:</div>
<div class="a" style="left:414px;top:693px;width:56px;height:20px;background:#fff;border-top:2px solid #000;border-left:2px solid #000;border-right:1px solid #F1EFE2;border-bottom:1px solid #F1EFE2"></div>
<div class="t" style="left:418px;top:697px;color:#ACA899">1,404m</div>
<div class="t" style="left:485px;top:696px;">Y:</div>
<div class="a" style="left:496px;top:693px;width:56px;height:20px;background:#fff;border-top:2px solid #000;border-left:2px solid #000;border-right:1px solid #F1EFE2;border-bottom:1px solid #F1EFE2"></div>
<div class="t" style="left:500px;top:697px;color:#ACA899">-0,0m</div>
<div class="t" style="left:567px;top:696px;">Z:</div>
<div class="a" style="left:578px;top:693px;width:56px;height:20px;background:#fff;border-top:2px solid #000;border-left:2px solid #000;border-right:1px solid #F1EFE2;border-bottom:1px solid #F1EFE2"></div>
<div class="t" style="left:582px;top:697px;color:#ACA899">4,467m</div>
<div class="sunk1" style="left:649px;top:692px;width:100px;height:21px;overflow:hidden"><div class="t" style="left:5px;top:4px;left:5px">Grid = 0,254m</div></div>
<div class="sunk1" style="left:307px;top:717px;width:152px;height:21px;overflow:hidden"><div class="t" style="left:5px;top:3px;">Click or click-and-drag to select objects</div></div>
<div class="sunk1" style="left:460px;top:717px;width:100px;height:21px;overflow:hidden"><div class="t" style="left:5px;top:3px;">Add Time Tag</div></div>
<div class="a" style="left:566px;top:717px;width:21px;height:21px;background:#7A875A;border-top:1px solid #ACA899;border-left:1px solid #ACA899;border-right:1px solid #fff;border-bottom:1px solid #fff"></div>
<div class="a" style="left:623px;top:717px;width:21px;height:21px;background:#7A875A;border-top:1px solid #ACA899;border-left:1px solid #ACA899;border-right:1px solid #fff;border-bottom:1px solid #fff"></div>
<div class="vsep" style="left:648px;top:718px;height:17px"></div>
<div class="vsep" style="left:724px;top:718px;height:17px"></div>
<div class="vsep" style="left:828px;top:694px;height:16px"></div>
<div class="vsep" style="left:828px;top:716px;height:16px"></div>
<div class="vsep" style="left:900px;top:694px;height:16px"></div>
<div class="vsep" style="left:900px;top:716px;height:16px"></div>
<div class="vsep" style="left:926px;top:694px;height:16px"></div>
<div class="vsep" style="left:926px;top:716px;height:16px"></div>
<div class="rais" style="left:753px;top:691px;width:48px;height:45px;background:#ECE9D8;box-shadow:1px 1px 0 #716F64"></div>
<div class="t" style="left:758px;top:707px;font-size:12px;line-height:14px">Animate</div>
<div class="a" style="left:831px;top:715px;width:67px;height:20px;background:#fff;border-top:2px solid #000;border-left:2px solid #000;border-right:1px solid #F1EFE2;border-bottom:1px solid #F1EFE2"></div>
<div class="t" style="left:835px;top:718px;">0</div>
<div class="a" style="left:0px;top:738px;width:100px;height:3px;background:linear-gradient(#1E7A1E 0,#4EA04E 1px,#5AAA5A 3px);"></div>
<div class="a" style="left:100px;top:738px;width:788px;height:3px;background:linear-gradient(#2050D0 0,#3C80E8 1px,#4890E8 3px);"></div>
<div class="a" style="left:888px;top:738px;width:1px;height:3px;background:#10308A;"></div>
<div class="a" style="left:889px;top:738px;width:135px;height:3px;background:linear-gradient(#1060D0 0,#18A8F0 1px,#18B8F0 3px);"></div>
<svg class="a" style="left:0;top:0" width="1024" height="741"><defs><linearGradient id="gArc" x1="0" y1="0" x2="1" y2="1"><stop offset="0" stop-color="#9A9A9A"/><stop offset="0.5" stop-color="#3E3E3E"/><stop offset="1" stop-color="#2A2A2A"/></linearGradient><linearGradient id="gArc2" x1="0" y1="0" x2="1" y2="0"><stop offset="0" stop-color="#A0A0A0"/><stop offset="0.45" stop-color="#5A5A5A"/><stop offset="1" stop-color="#2A2A2A"/></linearGradient><linearGradient id="gHead" x1="0" y1="0" x2="1" y2="1"><stop offset="0" stop-color="#5A5A5A"/><stop offset="0.5" stop-color="#F4F4F4"/><stop offset="1" stop-color="#6A6A6A"/></linearGradient><linearGradient id="gLav" x1="0" y1="0" x2="1" y2="1"><stop offset="0" stop-color="#F4F4FF"/><stop offset="1" stop-color="#B4B4D4"/></linearGradient><linearGradient id="gGray" x1="0" y1="0" x2="1" y2="1"><stop offset="0" stop-color="#3A3A3A"/><stop offset="1" stop-color="#A8A8A8"/></linearGradient><linearGradient id="gCur" x1="0" y1="0" x2="1" y2="0"><stop offset="0" stop-color="#5A5A5A"/><stop offset="0.3" stop-color="#D0D0D0"/><stop offset="1" stop-color="#FFFFFF"/></linearGradient><linearGradient id="gLet" x1="0" y1="0" x2="0" y2="1"><stop offset="0" stop-color="#9A9AA8"/><stop offset="0.45" stop-color="#4A4A58"/><stop offset="1" stop-color="#1E1E28"/></linearGradient><radialGradient id="gBallG" cx="0.35" cy="0.35" r="0.7"><stop offset="0" stop-color="#FFFFFF"/><stop offset="1" stop-color="#7A7A7A"/></radialGradient><radialGradient id="gBallY" cx="0.35" cy="0.35" r="0.7"><stop offset="0" stop-color="#FFFFB0"/><stop offset="1" stop-color="#C8A800"/></radialGradient><radialGradient id="gBallB" cx="0.35" cy="0.35" r="0.7"><stop offset="0" stop-color="#F0F4FF"/><stop offset="1" stop-color="#6A7090"/></radialGradient><radialGradient id="gBallT" cx="0.4" cy="0.3" r="0.7"><stop offset="0" stop-color="#7AB0B8"/><stop offset="1" stop-color="#0E2A30"/></radialGradient><radialGradient id="gRed" cx="0.48" cy="0.62" r="0.62"><stop offset="0" stop-color="#FF7070"/><stop offset="0.25" stop-color="#F01010"/><stop offset="0.75" stop-color="#B00000"/><stop offset="1" stop-color="#400000"/></radialGradient><radialGradient id="gRed2" cx="0.4" cy="0.35" r="0.7"><stop offset="0" stop-color="#FF9A9A"/><stop offset="1" stop-color="#D00000"/></radialGradient><radialGradient id="gYel" cx="0.4" cy="0.35" r="0.7"><stop offset="0" stop-color="#FFFFA0"/><stop offset="1" stop-color="#E0A000"/></radialGradient><linearGradient id="gOr" x1="0" y1="0" x2="0" y2="1"><stop offset="0" stop-color="#FFE8A0"/><stop offset="1" stop-color="#E8A030"/></linearGradient><linearGradient id="gTeal" x1="0" y1="0" x2="1" y2="1"><stop offset="0" stop-color="#163C44"/><stop offset="1" stop-color="#6A98A0"/></linearGradient><linearGradient id="gSteel" x1="0" y1="0" x2="1" y2="1"><stop offset="0" stop-color="#E8ECF8"/><stop offset="1" stop-color="#7A84A0"/></linearGradient><linearGradient id="gBar" x1="0" y1="0" x2="0" y2="1"><stop offset="0" stop-color="#5A5A5A"/><stop offset="1" stop-color="#BABABA"/></linearGradient><linearGradient id="gBar2" x1="0" y1="0" x2="0" y2="1"><stop offset="0" stop-color="#9A9AB8"/><stop offset="1" stop-color="#F4F4F4"/></linearGradient></defs><path d="M19.5 63.5A6.6 6.6 0 0 1 32.7 63.5" stroke="url(#gArc2)" stroke-width="4.4" fill="none"/><path d="M12.8 62.3L18.2 63.6L23.8 62.3L18.5 74Z" fill="url(#gHead)" stroke="#2A2A2A" stroke-width="0.9" stroke-linejoin="round"/><g transform="translate(80,0) scale(-1,1)"><path d="M19.5 63.5A6.6 6.6 0 0 1 32.7 63.5" stroke="url(#gArc2)" stroke-width="4.4" fill="none"/><path d="M12.8 62.3L18.2 63.6L23.8 62.3L18.5 74Z" fill="url(#gHead)" stroke="#2A2A2A" stroke-width="0.9" stroke-linejoin="round"/></g><rect x="83.5" y="53.5" width="9" height="9" rx="1" fill="url(#gLav)" stroke="#50548E"/><rect x="96.5" y="67.5" width="8" height="9" rx="1" fill="url(#gLav)" stroke="#50548E"/><ellipse cx="92.4" cy="62.6" rx="2.1" ry="3" transform="rotate(-45 92.4 62.6)" fill="none" stroke="#B01020" stroke-width="1.3"/><ellipse cx="96" cy="66.8" rx="2.1" ry="3" transform="rotate(-45 96 66.8)" fill="none" stroke="#B01020" stroke-width="1.3"/><rect x="115.5" y="53.5" width="9" height="9" rx="1" fill="url(#gLav)" stroke="#50548E"/><rect x="128.5" y="67.5" width="8" height="9" rx="1" fill="url(#gLav)" stroke="#50548E"/><path d="M122 64.5A2.5 2.5 0 0 1 126 61" fill="none" stroke="#B01020" stroke-width="1.4"/><rect x="129" y="58" width="1" height="1" fill="#C04040"/><rect x="131" y="60" width="1" height="1" fill="#C04040"/><rect x="133" y="60" width="1" height="1" fill="#C04040"/><rect x="135" y="62" width="1" height="1" fill="#C04040"/><rect x="128" y="62" width="1" height="1" fill="#C04040"/><rect x="131" y="62" width="1" height="1" fill="#C04040"/><rect x="119" y="67" width="1" height="1" fill="#C04040"/><rect x="119" y="69" width="1" height="1" fill="#C04040"/><rect x="121" y="68" width="1" height="1" fill="#C04040"/><rect x="123" y="66" width="1" height="1" fill="#C04040"/><rect x="123" y="70" width="1" height="1" fill="#C04040"/><rect x="120" y="71" width="1" height="1" fill="#C04040"/><rect x="130" y="64" width="1" height="1" fill="#C04040"/><path d="M160.5 55.5V71.5L163.3 68.8L166.3 75.8L168.6 74.8L165.8 68H170.5Z" fill="url(#gCur)" stroke="#2A2A2A" stroke-width="0.9" stroke-linejoin="round"/><rect x="185" y="54" width="2" height="2" fill="#000"/><rect x="185" y="74" width="2" height="2" fill="#000"/><rect x="185" y="54" width="2" height="2" fill="#000"/><rect x="205" y="54" width="2" height="2" fill="#000"/><rect x="189" y="54" width="2" height="2" fill="#000"/><rect x="189" y="74" width="2" height="2" fill="#000"/><rect x="185" y="58" width="2" height="2" fill="#000"/><rect x="205" y="58" width="2" height="2" fill="#000"/><rect x="193" y="54" width="2" height="2" fill="#000"/><rect x="193" y="74" width="2" height="2" fill="#000"/><rect x="185" y="62" width="2" height="2" fill="#000"/><rect x="205" y="62" width="2" height="2" fill="#000"/><rect x="197" y="54" width="2" height="2" fill="#000"/><rect x="197" y="74" width="2" height="2" fill="#000"/><rect x="185" y="66" width="2" height="2" fill="#000"/><rect x="205" y="66" width="2" height="2" fill="#000"/><rect x="201" y="54" width="2" height="2" fill="#000"/><rect x="201" y="74" width="2" height="2" fill="#000"/><rect x="185" y="70" width="2" height="2" fill="#000"/><rect x="205" y="70" width="2" height="2" fill="#000"/><rect x="205" y="54" width="2" height="2" fill="#000"/><rect x="205" y="74" width="2" height="2" fill="#000"/><rect x="185" y="74" width="2" height="2" fill="#000"/><rect x="205" y="74" width="2" height="2" fill="#000"/><rect x="188.5" y="57.5" width="15" height="15" fill="#DCDCEA" stroke="#8A8A98"/><path d="M210 76V79H207Z" fill="#000"/><rect x="296" y="55" width="17" height="1" fill="#000"/><rect x="296" y="57" width="13" height="1" fill="#000"/><rect x="296" y="59" width="8" height="1" fill="#000"/><rect x="296" y="61" width="8" height="1" fill="#000"/><rect x="296" y="63" width="6" height="1" fill="#000"/><rect x="296" y="65" width="8" height="1" fill="#000"/><rect x="296" y="67" width="8" height="1" fill="#000"/><rect x="296" y="69" width="6" height="1" fill="#000"/><rect x="296" y="71" width="8" height="1" fill="#000"/><rect x="296" y="73" width="9" height="1" fill="#000"/><rect x="296" y="75" width="7" height="1" fill="#000"/><path d="M308.5 60V72L310.5 70L312.5 75.2L314.2 74.5L312.3 69.5H316Z" fill="#E4E4E4" stroke="#4A4A4A" stroke-width="0.8" stroke-linejoin="round"/><rect x="334" y="64" width="20" height="2" fill="#3A3A3A"/><rect x="343" y="55" width="2" height="20" fill="#3A3A3A"/><path d="M344 53.8L339.3 59H348.7Z M344 75.8L339.3 70.8H348.7Z M332.8 65L338 60.3V69.7Z M355.2 65L350 60.3V69.7Z" fill="url(#gGray)" stroke="#3A3A3A" stroke-width="0.6"/><path d="M380.6 59.2A7.8 7.8 0 1 1 370.6 60.1" stroke="#3A3A44" stroke-width="4.2" fill="none"/><path d="M374.75 73.3A7.8 7.8 0 0 1 368.8 62.9M383.4 68.3A7.8 7.8 0 0 1 378.8 72.9" stroke="#B8B8C4" stroke-width="1.3" fill="none"/><path d="M367 56.5L375.5 55L374.2 63.7Z" fill="#45454F" stroke="#2A2A30" stroke-width="0.7" stroke-linejoin="round"/><rect x="400" y="57" width="16" height="16" fill="url(#gGray)"/><rect x="400.5" y="63.5" width="9" height="9" fill="#F4F6FA" stroke="#E02020"/><path d="M423 76V79H420Z" fill="#000"/><path d="M440 66L439 58.5M440 66L446.5 62M440 66L433 68.5M440 66L440.3 73" stroke="#6A6A6A" stroke-width="1.6"/><circle cx="439" cy="58.3" r="2.7" fill="url(#gBallY)"/><circle cx="446.5" cy="62" r="2.4" fill="url(#gBallG)"/><circle cx="432.8" cy="68.5" r="2.4" fill="url(#gBallG)"/><circle cx="440.3" cy="73" r="2.4" fill="url(#gBallG)"/><path d="M538.5 71A4 4 0 0 0 546.5 71" fill="#D8D8D8" stroke="#A0A0A0" stroke-width="0.8"/><path d="M549.5 66A4 4 0 0 0 557.5 66" fill="#D8D8D8" stroke="#A0A0A0" stroke-width="0.8"/><rect x="538.5" y="55.5" width="8" height="16" fill="url(#gBar)" stroke="#1A2478"/><rect x="549.5" y="55.5" width="8" height="11" fill="url(#gBar2)" stroke="#1A2478"/><circle cx="542.5" cy="71" r="2" fill="#F00010" stroke="#fff" stroke-width="0.6"/><circle cx="553.5" cy="66" r="2" fill="#F00010" stroke="#fff" stroke-width="0.6"/><path d="M562 76V79H559Z" fill="#000"/><text x="579.5" y="73" font-family="Liberation Sans" font-weight="bold" font-size="20" fill="url(#gLet)" stroke="#202028" stroke-width="0.4" textLength="14.5" lengthAdjust="spacingAndGlyphs">X</text><text x="610.5" y="72.5" font-family="Liberation Sans" font-weight="bold" font-size="20" fill="url(#gLet)" stroke="#202028" stroke-width="0.4" textLength="15.5" lengthAdjust="spacingAndGlyphs">Y</text><text x="643" y="72.5" font-family="Liberation Sans" font-weight="bold" font-size="20" fill="url(#gLet)" stroke="#202028" stroke-width="0.4" textLength="14.3" lengthAdjust="spacingAndGlyphs">Z</text><text x="671.5" y="70" font-family="Liberation Sans" font-weight="bold" font-size="14" fill="url(#gLet)" stroke="#202028" stroke-width="0.3" textLength="20.5" lengthAdjust="spacingAndGlyphs">XY</text><path d="M696 76V79H693Z" fill="#000"/><path d="M710 56V73.5L718.2 61Z" fill="url(#gTeal)" stroke="#1A3038" stroke-width="0.6"/><rect x="719" y="54" width="2" height="21.5" fill="#D04848"/><path d="M730 56V73.5L721.8 61Z" fill="url(#gSteel)" stroke="#505870" stroke-width="0.6"/><circle cx="752" cy="56.8" r="3.1" fill="url(#gBallT)"/><circle cx="745" cy="61" r="2.9" fill="url(#gBallB)" stroke="#4A5070" stroke-width="0.5"/><circle cx="759.2" cy="61" r="2.9" fill="url(#gBallB)" stroke="#4A5070" stroke-width="0.5"/><circle cx="745" cy="68.8" r="2.9" fill="url(#gBallB)" stroke="#4A5070" stroke-width="0.5"/><circle cx="759.2" cy="68.8" r="2.9" fill="url(#gBallB)" stroke="#4A5070" stroke-width="0.5"/><circle cx="752" cy="72.9" r="2.9" fill="url(#gBallB)" stroke="#4A5070" stroke-width="0.5"/><circle cx="752" cy="65.2" r="1.1" fill="#F00000"/><path d="M767 76V79H764Z" fill="#000"/><path d="M773 66.5L780 59.5L787 66.5L780 73.5Z" fill="url(#gTeal)" stroke="#1A3038" stroke-width="0.6"/><path d="M784.5 60L789.5 55L794.5 60L789.5 65Z" fill="url(#gSteel)" stroke="#505870" stroke-width="0.6"/><path d="M781 75.2L795.5 61.6" stroke="#E02020" stroke-width="1.2"/><path d="M799 76V79H796Z" fill="#000"/><rect x="931" y="56" width="1" height="1" fill="#000"/><rect x="931" y="58" width="1" height="1" fill="#000"/><rect x="931" y="60" width="1" height="1" fill="#000"/><rect x="931" y="62" width="1" height="1" fill="#000"/><rect x="931" y="64" width="1" height="1" fill="#000"/><rect x="931" y="66" width="1" height="1" fill="#000"/><rect x="931" y="68" width="1" height="1" fill="#000"/><rect x="931" y="70" width="1" height="1" fill="#000"/><rect x="933" y="59" width="1" height="1" fill="#000"/><rect x="933" y="71" width="1" height="1" fill="#000"/><rect x="935" y="59" width="1" height="1" fill="#000"/><rect x="935" y="71" width="1" height="1" fill="#000"/><rect x="937" y="59" width="1" height="1" fill="#000"/><rect x="937" y="71" width="1" height="1" fill="#000"/><rect x="939" y="59" width="1" height="1" fill="#000"/><rect x="939" y="71" width="1" height="1" fill="#000"/><rect x="941" y="59" width="1" height="1" fill="#000"/><rect x="941" y="71" width="1" height="1" fill="#000"/><rect x="944.5" y="55.5" width="9" height="9" rx="1" fill="url(#gOr)" stroke="#7A5A20"/><rect x="944.5" y="67.5" width="9" height="9" rx="1" fill="url(#gOr)" stroke="#7A5A20"/><circle cx="982" cy="65" r="11.6" fill="url(#gRed)"/><clipPath id="cpS"><path d="M970 63C972 61 975 57.5 978.5 59.5C980.5 60.5 982 63.5 984 61C986 58.5 988.5 58 990.5 61C992 63 993 65 994 67V52H970Z"/></clipPath><clipPath id="cpC"><circle cx="982" cy="65" r="11.6"/></clipPath><g clip-path="url(#cpC)"><g clip-path="url(#cpS)"><circle cx="982" cy="65" r="11.6" fill="#fff"/><rect x="970" y="53" width="2" height="2" fill="#000"/><rect x="974" y="53" width="2" height="2" fill="#000"/><rect x="978" y="53" width="2" height="2" fill="#000"/><rect x="982" y="53" width="2" height="2" fill="#000"/><rect x="986" y="53" width="2" height="2" fill="#000"/><rect x="990" y="53" width="2" height="2" fill="#000"/><rect x="972" y="55" width="2" height="2" fill="#000"/><rect x="976" y="55" width="2" height="2" fill="#000"/><rect x="980" y="55" width="2" height="2" fill="#000"/><rect x="984" y="55" width="2" height="2" fill="#000"/><rect x="988" y="55" width="2" height="2" fill="#000"/><rect x="992" y="55" width="2" height="2" fill="#000"/><rect x="970" y="57" width="2" height="2" fill="#000"/><rect x="974" y="57" width="2" height="2" fill="#000"/><rect x="978" y="57" width="2" height="2" fill="#000"/><rect x="982" y="57" width="2" height="2" fill="#000"/><rect x="986" y="57" width="2" height="2" fill="#000"/><rect x="990" y="57" width="2" height="2" fill="#000"/><rect x="972" y="59" width="2" height="2" fill="#000"/><rect x="976" y="59" width="2" height="2" fill="#000"/><rect x="980" y="59" width="2" height="2" fill="#000"/><rect x="984" y="59" width="2" height="2" fill="#000"/><rect x="988" y="59" width="2" height="2" fill="#000"/><rect x="992" y="59" width="2" height="2" fill="#000"/><rect x="970" y="61" width="2" height="2" fill="#000"/><rect x="974" y="61" width="2" height="2" fill="#000"/><rect x="978" y="61" width="2" height="2" fill="#000"/><rect x="982" y="61" width="2" height="2" fill="#000"/><rect x="986" y="61" width="2" height="2" fill="#000"/><rect x="990" y="61" width="2" height="2" fill="#000"/><rect x="972" y="63" width="2" height="2" fill="#000"/><rect x="976" y="63" width="2" height="2" fill="#000"/><rect x="980" y="63" width="2" height="2" fill="#000"/><rect x="984" y="63" width="2" height="2" fill="#000"/><rect x="988" y="63" width="2" height="2" fill="#000"/><rect x="992" y="63" width="2" height="2" fill="#000"/><rect x="970" y="65" width="2" height="2" fill="#000"/><rect x="974" y="65" width="2" height="2" fill="#000"/><rect x="978" y="65" width="2" height="2" fill="#000"/><rect x="982" y="65" width="2" height="2" fill="#000"/><rect x="986" y="65" width="2" height="2" fill="#000"/><rect x="990" y="65" width="2" height="2" fill="#000"/><rect x="972" y="67" width="2" height="2" fill="#000"/><rect x="976" y="67" width="2" height="2" fill="#000"/><rect x="980" y="67" width="2" height="2" fill="#000"/><rect x="984" y="67" width="2" height="2" fill="#000"/><rect x="988" y="67" width="2" height="2" fill="#000"/><rect x="992" y="67" width="2" height="2" fill="#000"/></g></g><clipPath id="cpM"><rect x="995" y="46" width="27" height="38"/></clipPath><g clip-path="url(#cpM)"><circle cx="1016" cy="59.3" r="5.2" fill="url(#gRed2)"/><circle cx="1021" cy="69" r="4.5" fill="#3C8CE8"/><circle cx="1010.3" cy="68.4" r="7.6" fill="url(#gYel)"/></g><path d="M4 6.5L7.5 5L10 9.5L12.5 5L16 6.5L12 11.5V18.5H8V11.5Z" fill="#F01818" stroke="#2A0808" stroke-width="1" stroke-linejoin="round"/><path d="M6.5 7L9.5 12V17" stroke="#FF8A8A" stroke-width="0.8" fill="none"/><defs><linearGradient id="gWB" x1="0" y1="0" x2="1" y2="1"><stop offset="0" stop-color="#5A9AFF"/><stop offset="0.5" stop-color="#2A6AF8"/><stop offset="1" stop-color="#1A4EE0"/></linearGradient><linearGradient id="gWC" x1="0" y1="0" x2="1" y2="1"><stop offset="0" stop-color="#F0906A"/><stop offset="0.5" stop-color="#E05A30"/><stop offset="1" stop-color="#C83A10"/></linearGradient></defs><rect x="955.5" y="2.5" width="20" height="20" rx="3" fill="url(#gWB)" stroke="#fff"/><rect x="960" y="15" width="7" height="3" fill="#fff"/><rect x="978.5" y="2.5" width="20" height="20" rx="3" fill="url(#gWB)" stroke="#fff"/><path d="M986 10.5V7.5H993V13.5H990.5" fill="none" stroke="#fff" stroke-width="1.2"/><rect x="983.6" y="11.2" width="6.8" height="5.8" fill="none" stroke="#fff" stroke-width="1.2"/><rect x="983" y="10.5" width="8" height="1.6" fill="#fff"/><rect x="985.5" y="6.8" width="8" height="1.6" fill="#fff"/><rect x="1001.5" y="2.5" width="20" height="20" rx="3" fill="url(#gWC)" stroke="#fff"/><path d="M1006.5 7.5L1016.5 17.5M1016.5 7.5L1006.5 17.5" stroke="#fff" stroke-width="2"/><defs><radialGradient id="gStar" cx="0.5" cy="0.5" r="0.5"><stop offset="0" stop-color="#FFFFFF"/><stop offset="0.25" stop-color="#D8D8C8"/><stop offset="0.6" stop-color="#7A7A7A"/><stop offset="1" stop-color="#505050"/></radialGradient></defs><path d="M846 94L851 93L853 89.5L857 92L862 89.5L861.5 95L864 98L859.5 101L860 104.5L855 102.5L851 104L850.5 100L846.5 98.5L849 96Z" fill="url(#gStar)"/><path d="M855.2 96.5L856 105L858.3 103L861.5 108.8L864 107.5L861 102L864.5 101.5Z" fill="#F4F4F4" stroke="#2A2A2A" stroke-width="0.9" stroke-linejoin="round"/><rect x="877" y="91" width="18" height="17.5" fill="none" stroke="#6A6A6A" stroke-width="2"/><path d="M882 108.5A13 13 0 0 1 895 95.5" fill="none" stroke="#1A1A48" stroke-width="8.5"/><path d="M879.8 108.5A15.2 15.2 0 0 1 895 93.3" fill="none" stroke="#4A58A8" stroke-width="2"/><path d="M880.4 108.5A14.6 14.6 0 0 1 895 93.9" fill="none" stroke="#C8D4FF" stroke-width="0.9"/><path d="M884.4 108.5A10.6 10.6 0 0 1 895 97.9" fill="none" stroke="#4A58A8" stroke-width="2"/><path d="M882.5 108.5A12.5 12.5 0 0 1 895 96.0" fill="none" stroke="#0A0A28" stroke-width="1"/><rect x="876.5" y="90.5" width="2" height="2" fill="#000"/><rect x="894" y="107" width="2" height="2" fill="#000"/><path d="M915 98L907.5 104.5M915 98V104.5M915 98L922.5 104.5" stroke="#2A2A2A" stroke-width="1.6"/><rect x="911" y="91" width="8" height="7" fill="#E4E4F4" stroke="#2E2A72" stroke-width="1.8"/><rect x="905" y="104.8" width="5" height="4.6" fill="#E4E4F4" stroke="#2E2A72" stroke-width="1.6"/><rect x="912.8" y="104.8" width="5" height="4.6" fill="#E4E4F4" stroke="#2E2A72" stroke-width="1.6"/><rect x="920.6" y="104.8" width="5" height="4.6" fill="#E4E4F4" stroke="#2E2A72" stroke-width="1.6"/><path d="M941 93A7.5 7.5 0 0 0 941 107" fill="none" stroke="#6A6A6A" stroke-width="3"/><circle cx="946" cy="100" r="6.6" fill="#DCDCDC" stroke="#111" stroke-width="1.8"/><circle cx="946" cy="100" r="4.5" fill="none" stroke="#8A8A8A" stroke-width="1"/><path d="M946 96V104M942 100H950M943.2 97.2L948.8 102.8M948.8 97.2L943.2 102.8" stroke="#9A9A9A" stroke-width="0.7"/><circle cx="946" cy="100" r="1.4" fill="#F00000"/><rect x="963" y="91.5" width="20" height="15" rx="2" fill="#9A9A9A" stroke="#2A2A2A" stroke-width="2"/><rect x="966" y="94" width="14" height="10" fill="#FFFFFF"/><rect x="968" y="95" width="4" height="6.5" fill="#5A6ACC"/><rect x="969" y="95" width="1" height="6.5" fill="#C8D0FF"/><path d="M974.5 95.5L978.5 102.5H970.5Z" fill="#F00000"/><rect x="966" y="106.5" width="14" height="2.5" fill="#3A3A3A"/><rect x="973" y="107" width="2" height="1.5" fill="#30C030"/><path d="M993.5 91.5H1004L1009.5 94.5V96L1005 95H993.5Z" fill="#6A6A6A" stroke="#222" stroke-width="1"/><path d="M999 95.5H1004.5L1004 107L1005 109.5H998.5L999.5 107Z" fill="#2A2A2A"/><rect x="1001" y="96" width="1.6" height="10" fill="#E02020"/><rect x="856" y="312" width="7" height="2" fill="#000"/><path d="M863 308.5V318M863.5 310.5H865L867 309.5H870.5V317H867L865 316H863.5" fill="#D8D8D8" stroke="#000" stroke-width="1.2"/><rect x="867" y="311" width="2" height="2" fill="#fff"/><path d="M896.5 307.5L898 309V320H903V309L904.5 307.5" fill="none" stroke="#000" stroke-width="1.5"/><rect x="898.5" y="308.5" width="4" height="5" fill="#9A9A9A"/><path d="M929.5 307.5L934.5 315M943.5 307.5L938.5 315" stroke="#9A9A9A" stroke-width="0.9"/><circle cx="936.5" cy="317" r="2.3" fill="none" stroke="#9A9A9A" stroke-width="0.9"/><path d="M932 312L934.5 315L935.5 311.5M941 312L938.5 315L937.5 311.5" fill="none" stroke="#8A8A8A" stroke-width="0.8"/><path d="M955.5 312V318A4 1.8 0 0 0 963.5 318V312Z" fill="#fff" stroke="#000" stroke-width="1.2"/><ellipse cx="959.5" cy="312" rx="4" ry="1.5" fill="#fff" stroke="#000" stroke-width="1.2"/><path d="M957.5 310L958 308.5L961.5 308L963.5 310" fill="none" stroke="#000" stroke-width="1.1"/><rect x="989.5" y="307.5" width="12" height="12" fill="#E8E8F0" stroke="#0A0AB0"/><rect x="989" y="307" width="13" height="3" fill="#0A0AD0"/><rect x="995" y="313" width="1" height="1" fill="#000"/><rect x="997" y="313" width="1" height="1" fill="#000"/><rect x="999" y="313" width="1" height="1" fill="#000"/><rect x="1001" y="313" width="1" height="1" fill="#000"/><rect x="1003" y="313" width="1" height="1" fill="#000"/><rect x="995" y="316" width="1" height="1" fill="#000"/><rect x="997" y="316" width="1" height="1" fill="#000"/><rect x="1001" y="316" width="1" height="1" fill="#000"/><rect x="1003" y="316" width="1" height="1" fill="#000"/><rect x="996" y="319" width="1" height="1" fill="#000"/><rect x="998" y="319" width="1" height="1" fill="#000"/><rect x="1001" y="319" width="1" height="1" fill="#000"/><rect x="1003" y="319" width="1" height="1" fill="#000"/><rect x="1003" y="314" width="1" height="1" fill="#000"/><rect x="999" y="317" width="1" height="1" fill="#000"/><path d="M9 648.5L5.5 652L9 655.5" fill="none" stroke="#000" stroke-width="1.1"/><path d="M146.5 648.5L150 652L146.5 655.5" fill="none" stroke="#000" stroke-width="1.1"/><path d="M357.5 701V698A2.5 2.5 0 0 1 362.5 698V701" fill="none" stroke="#000" stroke-width="1.3"/><rect x="356" y="700.5" width="8" height="6.5" rx="1" fill="#000"/><rect x="357" y="702.5" width="6" height="0.9" fill="#9A9A9A"/><rect x="357" y="704.6" width="6" height="0.9" fill="#9A9A9A"/><rect x="381" y="695" width="13" height="13" fill="none" stroke="#000" stroke-width="2"/><path d="M387.5 696V707M382 701.5H393" stroke="#8A8A7A" stroke-width="0.8"/><circle cx="387.5" cy="701.5" r="2.2" fill="#9A9A9A" stroke="#000" stroke-width="1.2"/><path d="M569 727L575.5 721.5L582.5 724V729.5L576 733.5L569 730.5Z" fill="#F4F4F4" stroke="#1A1A1A" stroke-width="0.9" stroke-linejoin="round"/><path d="M576 727V733.5L582.5 729.5V724Z" fill="#B0B0B0"/><path d="M569 727L576 727.5L582.5 724" fill="none" stroke="#C8C8C8" stroke-width="0.6"/><rect x="597" y="719" width="2" height="2" fill="#000"/><rect x="597" y="731" width="2" height="2" fill="#000"/><rect x="597" y="719" width="2" height="2" fill="#000"/><rect x="609" y="719" width="2" height="2" fill="#000"/><rect x="601" y="719" width="2" height="2" fill="#000"/><rect x="601" y="731" width="2" height="2" fill="#000"/><rect x="597" y="723" width="2" height="2" fill="#000"/><rect x="609" y="723" width="2" height="2" fill="#000"/><rect x="605" y="719" width="2" height="2" fill="#000"/><rect x="605" y="731" width="2" height="2" fill="#000"/><rect x="597" y="727" width="2" height="2" fill="#000"/><rect x="609" y="727" width="2" height="2" fill="#000"/><rect x="609" y="719" width="2" height="2" fill="#000"/><rect x="609" y="731" width="2" height="2" fill="#000"/><rect x="597" y="731" width="2" height="2" fill="#000"/><rect x="609" y="731" width="2" height="2" fill="#000"/><rect x="599" y="721" width="9" height="9" fill="#D8D8D8"/><circle cx="607" cy="725.5" r="3.6" fill="#3A3A3A"/><circle cx="606" cy="724.5" r="1.2" fill="#C8C8C8"/><path d="M626.5 725L632.5 721.5L639.5 724.5L633.5 728Z" fill="#F4F4F4" stroke="#000" stroke-width="0.9"/><path d="M626.5 725L633.5 728V734L626.5 731Z" fill="#D0D0D0" stroke="#000" stroke-width="0.9"/><path d="M633.5 728L639.5 724.5V730.5L633.5 734Z" fill="#505050" stroke="#000" stroke-width="0.9"/><path d="M655.5 729.5A3.6 3.6 0 0 1 662 727.0" fill="none" stroke="#8A0A10" stroke-width="3"/><path d="M655.5 729.5L658 732.5M662 727.0L663 730.5" stroke="#8A0A10" stroke-width="3"/><path d="M657 733.0H660M662 731.5H665" stroke="#000" stroke-width="1"/><path d="M678.5 729.5A3.6 3.6 0 0 1 685 727.0" fill="none" stroke="#8A0A10" stroke-width="3"/><path d="M678.5 729.5L681 732.5M685 727.0L686 730.5" stroke="#8A0A10" stroke-width="3"/><path d="M680 733.0H683M685 731.5H688" stroke="#000" stroke-width="1"/><path d="M702.5 729.5A3.6 3.6 0 0 1 709 727.0" fill="none" stroke="#8A0A10" stroke-width="3"/><path d="M702.5 729.5L705 732.5M709 727.0L710 730.5" stroke="#8A0A10" stroke-width="3"/><path d="M704 733.0H707M709 731.5H712" stroke="#000" stroke-width="1"/><path d="M730.5 729.5A3.6 3.6 0 0 1 737 727.0" fill="none" stroke="#8A0A10" stroke-width="3"/><path d="M730.5 729.5L733 732.5M737 727.0L738 730.5" stroke="#8A0A10" stroke-width="3"/><path d="M732 733.0H735M737 731.5H740" stroke="#000" stroke-width="1"/><text x="663" y="725" font-family="Liberation Sans" font-weight="bold" font-size="8" fill="#000">3</text><text x="708" y="727" font-family="Liberation Sans" font-weight="bold" font-size="9" fill="#000">%</text><path d="M683 727L691 720M688 725L690.5 731.5M684.5 733H693" stroke="#000" stroke-width="1"/><path d="M688.5 722L690 724.5L691.5 722ZM688 730L690.5 733L692.5 730Z" fill="#000"/><rect x="738" y="719.5" width="6.5" height="11" fill="#ECE9D8" stroke="#ACA899" stroke-width="0.8"/><path d="M739.5 723.5L741.2 721.5L743 723.5ZM739.5 726.5H743L741.2 728.5Z" fill="#000"/><rect x="808" y="697" width="2" height="8" fill="#2A2A2A"/><path d="M815.5 697V705L810 701ZM823 697V705L817.5 701Z" fill="#3A3A3A"/><path d="M841 697V705L835.5 701Z" fill="#3A3A3A"/><rect x="842.5" y="697" width="3" height="8" fill="#2A2A2A"/><rect x="857.5" y="695.5" width="13" height="12" fill="none" stroke="#000" stroke-width="1.2"/><path d="M861.5 697.8V705.3L867.5 701.5Z" fill="#3A3A3A"/><path d="M875 708V711H872Z" fill="#000"/><rect x="882" y="697" width="3" height="8" fill="#2A2A2A"/><path d="M887 697V705L893 701Z" fill="#3A3A3A"/><path d="M905 697V705L910.5 701ZM912 697V705L917.5 701Z" fill="#3A3A3A"/><rect x="918" y="697" width="2.2" height="8" fill="#2A2A2A"/><circle cx="811.5" cy="723" r="2.8" fill="none" stroke="#000" stroke-width="1.6"/><rect x="814" y="722" width="9" height="2.2" fill="#000"/><rect x="818" y="723" width="2" height="3.5" fill="#000"/><rect x="821" y="723" width="1.8" height="2.5" fill="#000"/><rect x="907.6" y="717.6" width="9.5" height="10" fill="none" stroke="#000" stroke-width="1.2"/><rect x="907" y="717" width="10.5" height="2.5" fill="#000"/><circle cx="915.6" cy="724.5" r="4.3" fill="#fff" stroke="#C82020" stroke-width="1.1"/><path d="M915.6 721.5V726M913.8 724.5L915.6 726.3L917.4 724.5" fill="none" stroke="#000" stroke-width="0.9"/><circle cx="936.5" cy="698.5" r="4.3" fill="#D8D8E0" stroke="#0A0A98" stroke-width="1.3"/><path d="M939.5 701.5L945.5 707.5" stroke="#0A0A98" stroke-width="2.2"/><rect x="957.5" y="693.5" width="12" height="10" fill="#C8C8C8" stroke="#A01010" stroke-width="1.2"/><path d="M963.5 693.5V703.5M957.5 698.5H969.5" stroke="#A01010" stroke-width="1.2"/><circle cx="958.5" cy="703" r="3.6" fill="#D8D8E0" stroke="#0A0A98" stroke-width="1.2"/><path d="M961 705.5L964.5 709" stroke="#0A0A98" stroke-width="1.8"/><path d="M977.5 697V694.5H980M992.5 697V694.5H990M977.5 705V707.5H980M992.5 705V707.5H990" fill="none" stroke="#000" stroke-width="1.1"/><path d="M981.5 699.5L984.5 696.5H992.5L989.5 699.5Z" fill="#F0F0F8" stroke="#0A0A98"/><rect x="981.5" y="699.5" width="8" height="7" fill="#C4C4CC" stroke="#0A0A98"/><path d="M989.5 699.5L992.5 696.5V703.5L989.5 706.5Z" fill="#7A7A80" stroke="#0A0A98"/><path d="M996 708V711H993Z" fill="#000"/><rect x="1003.5" y="693.5" width="12" height="9" fill="#C8C8C8" stroke="#A01010" stroke-width="1.2"/><path d="M1009.5 693.5V702.5M1003.5 698H1015.5" stroke="#A01010" stroke-width="1.2"/><path d="M1001.5 701.5L1004 699H1011L1008.5 701.5Z" fill="#F0F0F8" stroke="#0A0A98"/><rect x="1001.5" y="701.5" width="7" height="7" fill="#C4C4CC" stroke="#0A0A98"/><path d="M1008.5 701.5L1011 699V706L1008.5 708.5Z" fill="#7A7A80" stroke="#0A0A98"/><path d="M1019 708V711H1016Z" fill="#000"/><rect x="931.5" y="716.5" width="15" height="14" fill="#ECE9D8" stroke="#000" stroke-width="1.2" stroke-dasharray="2 1.5"/><circle cx="937" cy="722" r="3.8" fill="#D8D8E0" stroke="#0A0A98" stroke-width="1.2"/><path d="M939.5 724.5L943.5 728.5" stroke="#0A0A98" stroke-width="2"/><rect x="957.3" y="719" width="2.4" height="9" rx="1.2" fill="#F4F4F4" stroke="#000" stroke-width="0.8"/><rect x="959.7" y="717" width="2.4" height="9" rx="1.2" fill="#F4F4F4" stroke="#000" stroke-width="0.8"/><rect x="962.1" y="716.5" width="2.4" height="9" rx="1.2" fill="#F4F4F4" stroke="#000" stroke-width="0.8"/><rect x="964.5" y="717.5" width="2.4" height="9" rx="1.2" fill="#F4F4F4" stroke="#000" stroke-width="0.8"/><rect x="966.9" y="719.5" width="2.4" height="9" rx="1.2" fill="#F4F4F4" stroke="#000" stroke-width="0.8"/><path d="M956.5 724H969V726.5C969 729.5 967 731.3 964 731.3H961C959 731.3 957.8 730.3 956.8 728.8L954 725.5C953.3 724.5 954.6 723.3 955.6 724.2L957 725.5Z" fill="#F4F4F4" stroke="#000" stroke-width="0.8"/><rect x="957.6" y="723.3" width="10.8" height="2" fill="#F4F4F4"/><rect x="959" y="726" width="1" height="1" fill="#A0A0A0"/><rect x="961" y="728" width="1" height="1" fill="#A0A0A0"/><rect x="963" y="726" width="1" height="1" fill="#A0A0A0"/><rect x="965" y="728" width="1" height="1" fill="#A0A0A0"/><rect x="967" y="726" width="1" height="1" fill="#A0A0A0"/><rect x="961" y="724" width="1" height="1" fill="#A0A0A0"/><rect x="965" y="724" width="1" height="1" fill="#A0A0A0"/><rect x="963" y="730" width="1" height="1" fill="#A0A0A0"/><circle cx="984.5" cy="724" r="4.8" fill="#C8C8C8" stroke="#0A0A98" stroke-width="1"/><path d="M984.5 724V717M984.5 724H992M984.5 724L978 729.5" stroke="#000" stroke-width="1"/><path d="M984.5 715.5L982.5 718.5H986.5ZM993 724L990 722V726ZM977.5 730.5L978.5 727L980.5 729Z" fill="#000"/><path d="M996 730V733H993Z" fill="#000"/><path d="M1011.5 722.5H1015.5V731.5H1005.5V726.5" fill="none" stroke="#000" stroke-width="1.3"/><rect x="1001.5" y="716.5" width="10" height="10" fill="none" stroke="#0A0A98" stroke-width="1.3"/><path d="M1004 719L1009 724" stroke="#000" stroke-width="0.9" stroke-dasharray="1 1"/><path d="M1003.3 718.3L1006.3 718.6L1003.6 721.3Z" fill="#000"/></svg>
</body></html>
